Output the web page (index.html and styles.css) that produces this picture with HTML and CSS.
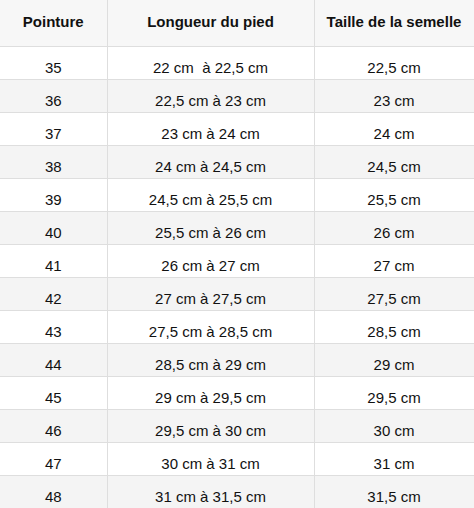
FILE: index.html
```html
<!DOCTYPE html>
<html lang="fr">
<head>
<meta charset="utf-8">
<link rel="stylesheet" href="styles.css">
</head>
<body>
<table class="sizes">
  <colgroup>
    <col class="c1"><col class="c2"><col class="c3">
  </colgroup>
  <thead>
    <tr><th>Pointure</th><th>Longueur du pied</th><th>Taille de la semelle</th></tr>
  </thead>
  <tbody>
    <tr><td>35</td><td>22 cm &nbsp;à 22,5 cm</td><td>22,5 cm</td></tr>
    <tr><td>36</td><td>22,5 cm à 23 cm</td><td>23 cm</td></tr>
    <tr><td>37</td><td>23 cm à 24 cm</td><td>24 cm</td></tr>
    <tr><td>38</td><td>24 cm à 24,5 cm</td><td>24,5 cm</td></tr>
    <tr><td>39</td><td>24,5 cm à 25,5 cm</td><td>25,5 cm</td></tr>
    <tr><td>40</td><td>25,5 cm à 26 cm</td><td>26 cm</td></tr>
    <tr><td>41</td><td>26 cm à 27 cm</td><td>27 cm</td></tr>
    <tr><td>42</td><td>27 cm à 27,5 cm</td><td>27,5 cm</td></tr>
    <tr><td>43</td><td>27,5 cm à 28,5 cm</td><td>28,5 cm</td></tr>
    <tr><td>44</td><td>28,5 cm à 29 cm</td><td>29 cm</td></tr>
    <tr><td>45</td><td>29 cm à 29,5 cm</td><td>29,5 cm</td></tr>
    <tr><td>46</td><td>29,5 cm à 30 cm</td><td>30 cm</td></tr>
    <tr><td>47</td><td>30 cm à 31 cm</td><td>31 cm</td></tr>
    <tr><td>48</td><td>31 cm à 31,5 cm</td><td>31,5 cm</td></tr>
  </tbody>
</table>
</body>
</html>
```
FILE: styles.css
```css
html, body {
  margin: 0;
  padding: 0;
  background: #ffffff;
}
.sizes {
  border-collapse: collapse;
  table-layout: fixed;
  width: 474px;
  font-family: "Liberation Sans", Arial, sans-serif;
  font-size: 15px;
  color: #111111;
}
.c1 { width: 107px; }
.c2 { width: 207px; }
.c3 { width: 160px; }
.sizes th,
.sizes td {
  text-align: center;
  line-height: 18px;
  border-bottom: 1px solid #dedede;
  border-right: 1px solid #dedede;
  white-space: nowrap;
}
.sizes th:last-child,
.sizes td:last-child {
  border-right: 1px solid #eeeeee;
}
.sizes th {
  font-weight: bold;
  background: #f7f7f7;
  height: 46px;
  padding: 13px 0 15px;
  box-sizing: border-box;
}
.sizes td {
  height: 33px;
  padding: 12px 0 2px;
  box-sizing: border-box;
}
.sizes tbody tr:nth-child(even) td {
  background: #f4f4f4;
}
```
